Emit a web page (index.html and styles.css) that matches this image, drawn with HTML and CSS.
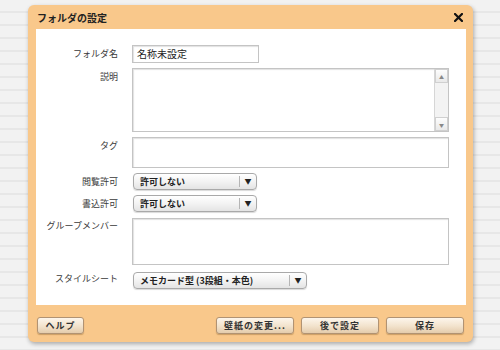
FILE: index.html
```html
<!DOCTYPE html>
<html lang="ja">
  <head>
    <meta charset="UTF-8" />
    <title>フォルダの設定</title>
    <link rel="stylesheet" href="styles.css">
  </head>
  <body>
    <div class="dialog">
      <div class="dialog-head">
        <span class="dialog-title">フォルダの設定</span>
        <svg class="close-btn" width="9" height="9" viewBox="0 0 9 9">
          <path d="M1 1 L8 8 M8 1 L1 8" stroke="#111" stroke-width="2.2" stroke-linecap="square" />
        </svg>
      </div>

      <div class="dialog-body">
        <div class="form">
          <label class="label">フォルダ名</label>
          <div class="field"><div class="input short">名称未設定</div></div>

          <label class="label">説明</label>
          <div class="field">
            <div class="input area desc">
              <div class="scrollbar">
                <span class="sb-btn">▲</span>
                <span class="sb-track"></span>
                <span class="sb-btn">▼</span>
              </div>
            </div>
          </div>

          <label class="label">タグ</label>
          <div class="field"><div class="input area tag"></div></div>

          <label class="label">閲覧許可</label>
          <div class="field">
            <div class="select">
              <span class="select-text">許可しない</span>
              <span class="select-arrow">▼</span>
            </div>
          </div>

          <label class="label">書込許可</label>
          <div class="field">
            <div class="select">
              <span class="select-text">許可しない</span>
              <span class="select-arrow">▼</span>
            </div>
          </div>

          <label class="label">グループメンバー</label>
          <div class="field"><div class="input area members"></div></div>

          <label class="label">スタイルシート</label>
          <div class="field">
            <div class="select wide">
              <span class="select-text">メモカード型 (3段組・本色)</span>
              <span class="select-arrow">▼</span>
            </div>
          </div>
        </div>
      </div>

      <div class="dialog-foot">
        <button class="btn help">ヘルプ</button>
        <div class="btn-group">
          <button class="btn">壁紙の変更...</button>
          <button class="btn">後で設定</button>
          <button class="btn">保存</button>
        </div>
      </div>
    </div>
  </body>
</html>
```

FILE: styles.css
```css
* {
  box-sizing: border-box;
  font-family: "Noto Sans CJK JP", "DejaVu Sans", sans-serif;
}

body {
  margin: 0;
  width: 500px;
  height: 350px;
  padding: 5px 27px 0 28px;
  overflow: hidden;
  background-color: #f1f1f1;
  background-image: repeating-linear-gradient(
    to bottom,
    #f2f2f2 0,
    #f2f2f2 11px,
    #e7e7e7 11px,
    #e7e7e7 13px
  );
}

.dialog {
  width: 445px;
  height: 337px;
  background-color: #f9c88b;
  border-radius: 6px;
  box-shadow: 1px 2px 4px rgba(0, 0, 0, 0.3);
  display: flex;
  flex-direction: column;
}

.dialog-head {
  height: 24px;
  display: flex;
  align-items: center;
  justify-content: space-between;
  padding: 0 10px 0 9px;
}

.dialog-title {
  font-size: 10px;
  font-weight: bold;
  color: #222;
}

.dialog-body {
  height: 276px;
  margin: 0 7px 0 8px;
  background: #fff;
  padding: 16px 17px 0 0;
}

.form {
  display: grid;
  grid-template-columns: 82px 1fr;
  column-gap: 14px;
  row-gap: 5px;
  align-items: start;
}

.label {
  text-align: right;
  font-size: 9px;
  line-height: 12px;
  padding-top: 3px;
  color: #3a3a3a;
}

.input {
  border: 1px solid #c4c4c4;
  box-shadow: inset 1px 1px 1px #e2e2e2;
  background: #fff;
  font-size: 10px;
  color: #222;
}

.input.short {
  width: 127px;
  height: 18px;
  line-height: 16px;
  padding-left: 4px;
}

.area {
  width: 317px;
}

.desc {
  height: 64px;
  display: flex;
  justify-content: flex-end;
}

.tag {
  height: 31px;
}

.members {
  height: 47px;
  margin-top: 1px;
}

.scrollbar {
  width: 14px;
  display: flex;
  flex-direction: column;
  border-left: 1px solid #d6d6d6;
  background: #f3f3f3;
}

.sb-btn {
  height: 14px;
  font-size: 5px;
  line-height: 13px;
  text-align: center;
  color: #888;
  background: linear-gradient(#fdfdfd, #e9e9e9);
  border: 1px solid #d0d0d0;
}

.sb-track {
  flex: 1;
}

.select {
  width: 124px;
  height: 17px;
  margin-left: 1px;
  display: flex;
  align-items: center;
  border: 1px solid #a9a9a9;
  border-radius: 4px;
  background: linear-gradient(#ffffff, #f3f3f3 50%, #e4e4e4);
  box-shadow: 0 1px 1px rgba(0, 0, 0, 0.15);
}

.select.wide {
  width: 174px;
  margin-top: 2px;
}

.select-text {
  flex: 1;
  padding-left: 6px;
  font-size: 9px;
  font-weight: bold;
  color: #222;
  white-space: nowrap;
}

.select-arrow {
  width: 17px;
  height: 11px;
  border-left: 1px solid #b5b5b5;
  font-size: 7px;
  line-height: 11px;
  text-align: center;
  color: #222;
}

.dialog-foot {
  display: flex;
  justify-content: space-between;
  padding: 12px 9px 0 9px;
}

.btn-group {
  display: flex;
  gap: 7px;
}

.btn {
  height: 17px;
  width: 78px;
  padding: 0;
  border: 1px solid #b19373;
  border-radius: 3px;
  background: linear-gradient(#fdf6ec, #f2e2cc 55%, #e4ccac);
  box-shadow: 0 1px 1px rgba(120, 80, 30, 0.35);
  font-size: 9px;
  font-weight: bold;
  color: #333;
  letter-spacing: 1px;
}

.btn.help {
  width: 47px;
}
```
